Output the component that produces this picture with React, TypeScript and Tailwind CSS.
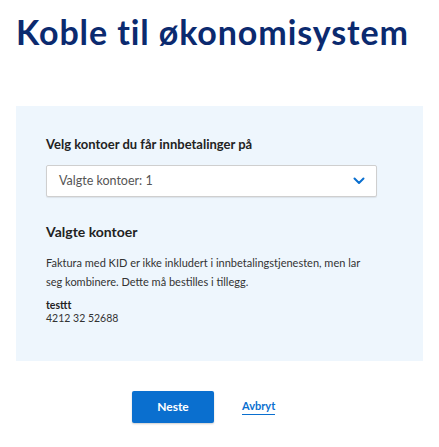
import React from "react";

export default function App() {
  return (
    <div className="w-[439px] h-[447px] bg-white font-['Lato','Noto_Sans',sans-serif]">
      <div className="pt-[12px] pl-[16px]">
        <h1 className="text-[34px] leading-[40px] font-bold text-[#0b2a6f] tracking-[0.9px]">
          Koble til økonomisystem
        </h1>
      </div>
      <div className="mx-[16px] mt-[54px] h-[255px] bg-[#eef6fd] px-[30px] pt-[30px]">
        <div className="text-[13px] leading-[16px] font-bold text-[#222]">
          Velg kontoer du får innbetalinger på
        </div>
        <div className="mt-[13px] h-[32px] w-[331px] bg-white border border-[#cfcfcf] rounded-[2px] shadow-[0_1px_1px_rgba(0,0,0,0.08)] flex items-center justify-between pl-[12px] pr-[10px]">
          <span className="text-[12.5px] text-[#555]">Valgte kontoer: 1</span>
          <svg width="12" height="8" viewBox="0 0 12 8" className="mr-[1px]">
            <path d="M1.5 1.5 L6 6 L10.5 1.5" fill="none" stroke="#0a6fcf" strokeWidth="2" strokeLinecap="round" strokeLinejoin="round" />
          </svg>
        </div>
        <div className="mt-[26px] text-[14px] leading-[18px] font-bold text-[#222]">Valgte kontoer</div>
        <p className="mt-[12px] text-[11px] leading-[19px] text-[#333] w-[322px]">
          Faktura med KID er ikke inkludert i innbetalingstjenesten, men lar seg kombinere. Dette må bestilles i tillegg.
        </p>
        <div className="mt-[8px] text-[10.5px] leading-[13px] text-[#222]">
          <div className="font-bold">testtt</div>
          <div className="text-[#333]">4212 32 52688</div>
        </div>
      </div>
      <div className="mt-[30px] pl-[132px] flex items-center gap-[28px]">
        <button className="w-[82px] h-[32px] bg-[#0a6fcf] rounded-[2px] text-white text-[12px] font-bold shadow-[0_1px_2px_rgba(0,0,0,0.2)]">
          Neste
        </button>
        <a className="text-[11px] font-bold text-[#0a6fcf] border-b border-[#0a6fcf] leading-[14px] pb-[1px]">Avbryt</a>
      </div>
    </div>
  );
}
